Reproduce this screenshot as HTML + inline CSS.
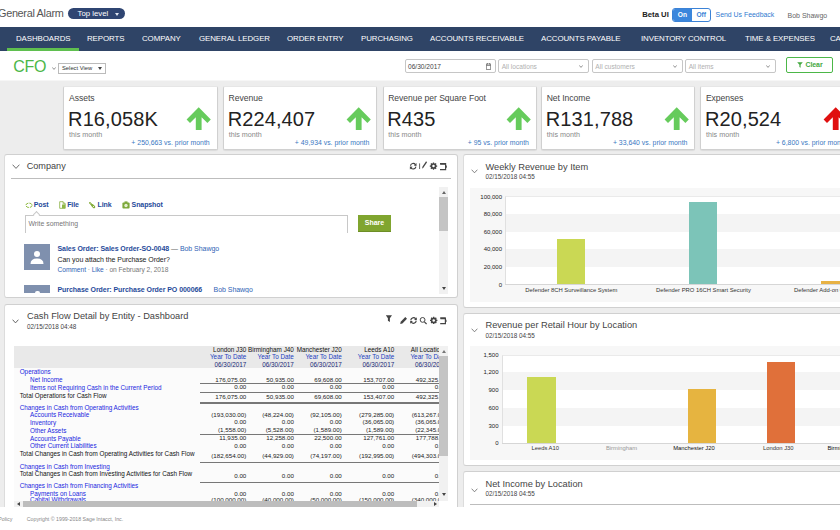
<!DOCTYPE html>
<html>
<head>
<meta charset="utf-8">
<title>CFO Dashboard</title>
<style>
*{box-sizing:border-box;margin:0;padding:0}
html,body{width:840px;height:530px;overflow:hidden;background:#fff;font-family:"Liberation Sans",sans-serif;color:#333}
.a{position:absolute;white-space:nowrap}
#top{left:0;top:0;width:840px;height:27px;background:#fff}
#nav{left:0;top:27px;width:840px;height:24px;background:#2f4466}
#nav span{position:absolute;top:7px;font-size:7.9px;color:#fff;letter-spacing:-0.08px;line-height:10px}
#sub{left:0;top:51px;width:840px;height:29px;background:#fff}
#bg{left:0;top:80px;width:840px;height:427px;background:#ededed;border-top:1px solid #f6f6f6}
#foot{left:0;top:507px;width:840px;height:23px;background:#fff;z-index:50}
.card{position:absolute;top:86px;height:64px;width:154.3px;background:#fff;border:1px solid #d0d0d0;border-top-color:#e6e6e6;border-radius:2px;box-shadow:0 1px 1px rgba(0,0,0,.08)}
.card .t{position:absolute;left:4.7px;top:6px;font-size:8.6px;color:#444;line-height:10px;letter-spacing:-0.05px}
.card .v{position:absolute;left:3.8px;top:20.9px;font-size:20px;color:#222;line-height:22px;letter-spacing:0.1px}
.card .m{position:absolute;left:4.8px;top:44.2px;font-size:7.2px;color:#888;line-height:8px}
.card .p{position:absolute;right:6.9px;top:52px;font-size:6.9px;color:#3a78c2;line-height:8px}
.card svg{position:absolute;left:121px;top:18.7px}
.panel{position:absolute;background:#fff;border:1px solid #d0d0d0;border-radius:3px}
.pt{position:absolute;font-size:9.25px;color:#444;line-height:12px}
.pd{position:absolute;font-size:6.35px;color:#444;line-height:8px}
.chev{position:absolute}
.sel{position:absolute;top:59px;height:14px;width:91px;border:1px solid #c6c6c6;border-radius:2px;background:#fff;font-size:6.6px;color:#b0b0b0;line-height:13.5px;padding-left:2.5px}
.tab{position:absolute;top:45.4px;font-size:7px;font-weight:bold;color:#1f4a9a;line-height:9px;letter-spacing:-0.1px}
.fl{position:absolute;left:51.5px;font-size:7px;line-height:9px;color:#1f4a9a;white-space:nowrap;letter-spacing:-0.05px}
.fl b{color:#1f4a9a}
.lk{color:#2f63b5}
.th,.tn{position:absolute;font-size:6.2px;line-height:7.5px;white-space:nowrap;text-align:right;color:#222}
.th{font-size:6.35px}
.tl{position:absolute;font-size:6.33px;line-height:7.5px;white-space:nowrap}
.yl{position:absolute;font-size:6px;line-height:7px;color:#222;white-space:nowrap;text-align:right}
.xl{position:absolute;width:120px;text-align:center;font-size:5.85px;line-height:7px;white-space:nowrap}
.th,.tn{position:absolute;font-size:6.2px;line-height:7.5px;white-space:nowrap;text-align:right;color:#222}
.th{font-size:6.35px}
.tl{position:absolute;font-size:6.33px;line-height:7.5px;white-space:nowrap}
.w{position:absolute;left:1px;top:0;right:0;bottom:0}
.panel{border-left-color:#dcdcdc}
.th,.tn{position:absolute;font-size:6.2px;line-height:7.5px;white-space:nowrap;text-align:right;color:#222}
.th{font-size:6.35px}
.tl{position:absolute;font-size:6.33px;line-height:7.5px;white-space:nowrap}
.th,.tn{position:absolute;font-size:6.2px;line-height:7.5px;white-space:nowrap;text-align:right;color:#222}
.th{font-size:6.35px}
.tl{position:absolute;font-size:6.33px;line-height:7.5px;white-space:nowrap}
</style>
</head>
<body>
<div class="a" id="top">
  <div class="a" style="left:-2px;top:5px;font-size:10.9px;color:#555;line-height:16px;letter-spacing:-0.32px">General Alarm</div>
  <div class="a" style="left:68px;top:8px;width:57px;height:11px;border-radius:6px;background:#2f4572;color:#fff;font-size:7.8px;line-height:11px;padding-left:9.5px">Top level</div>
  <div class="a" style="left:115px;top:13px;width:0;height:0;border-left:2.5px solid transparent;border-right:2.5px solid transparent;border-top:3px solid #dfe5f0"></div>
  <div class="a" style="left:642.3px;top:10.2px;font-size:7.7px;color:#222;line-height:9px;font-weight:bold">Beta UI</div>
  <div class="a" style="left:671.7px;top:8px;width:39.2px;height:14px;border:1px solid #3b82d6;border-radius:3px;background:#fff;overflow:hidden">
     <div class="a" style="left:0;top:0;width:19.5px;height:12px;background:#3b86dc;color:#fff;font-size:6.6px;line-height:12px;text-align:center;font-weight:bold">On</div>
     <div class="a" style="left:19.5px;top:0;width:18px;height:12px;color:#3b82d6;font-size:6.6px;line-height:12px;text-align:center;font-weight:bold">Off</div>
  </div>
  <div class="a" style="left:715.6px;top:10.2px;font-size:6.9px;color:#2f7ad0;line-height:9px">Send Us Feedback</div>
  <div class="a" style="left:787.5px;top:10.5px;font-size:7px;color:#666;line-height:9px">Bob Shawgo</div>
</div>
<div class="a" id="nav">
  <div class="a" style="left:7px;top:21px;width:72px;height:3px;background:#5fbf4f"></div>
  <span style="left:16px">DASHBOARDS</span>
  <span style="left:87px">REPORTS</span>
  <span style="left:142px">COMPANY</span>
  <span style="left:199px">GENERAL LEDGER</span>
  <span style="left:287px">ORDER ENTRY</span>
  <span style="left:361px">PURCHASING</span>
  <span style="left:430px">ACCOUNTS RECEIVABLE</span>
  <span style="left:541px">ACCOUNTS PAYABLE</span>
  <span style="left:641px">INVENTORY CONTROL</span>
  <span style="left:745px">TIME &amp; EXPENSES</span>
  <span style="left:830px">CASH</span>
</div>
<div class="a" id="sub">
  <div class="a" style="left:13.3px;top:4.6px;font-size:16px;color:#4cb748;line-height:22px;letter-spacing:-0.3px">CFO</div>
</div>
<svg class="a" style="left:52px;top:67px" width="4" height="3" viewBox="0 0 4 3"><path d="M0.3 0.4 L2 2.4 L3.7 0.4" fill="none" stroke="#666" stroke-width="0.7"/></svg>
<div class="a" style="left:58px;top:63px;width:48px;height:10.5px;border:1px solid #bbb;background:#fff;font-size:5.8px;line-height:8px;color:#333;padding-left:3px">Select View</div>
<div class="a" style="left:98px;top:67px;width:0;height:0;border-left:2px solid transparent;border-right:2px solid transparent;border-top:3px solid #444"></div>

<div class="sel" style="left:404.5px;color:#444">06/30/2017<svg class="a" style="right:4px;top:2.5px" width="5" height="7" viewBox="0 0 5 7"><rect x="0.3" y="1" width="4.4" height="5.6" fill="none" stroke="#666" stroke-width="0.7"/><path d="M0.3 2.5h4.4M1.5 0v1.6M3.5 0v1.6" stroke="#666" stroke-width="0.7"/></svg></div>
<div class="sel" style="left:498.2px">All locations<svg class="a" style="right:5px;top:5px" width="4" height="3" viewBox="0 0 4 3"><path d="M0.3 0.4 L2 2.4 L3.7 0.4" fill="none" stroke="#777" stroke-width="0.8"/></svg></div>
<div class="sel" style="left:591.8px">All customers<svg class="a" style="right:5px;top:5px" width="4" height="3" viewBox="0 0 4 3"><path d="M0.3 0.4 L2 2.4 L3.7 0.4" fill="none" stroke="#777" stroke-width="0.8"/></svg></div>
<div class="sel" style="left:685.2px">All items<svg class="a" style="right:5px;top:5px" width="4" height="3" viewBox="0 0 4 3"><path d="M0.3 0.4 L2 2.4 L3.7 0.4" fill="none" stroke="#777" stroke-width="0.8"/></svg></div>
<div class="a" style="left:786px;top:56.8px;width:46.5px;height:16px;border:1px solid #4cb748;border-radius:2px;color:#43a83f;font-size:7px;font-weight:bold;line-height:14px;padding-left:18.5px;letter-spacing:-0.1px">Clear<svg class="a" style="left:9.5px;top:4px" width="6" height="6" viewBox="0 0 6 6"><path d="M0.2 0.2h5.6L3.6 2.8v3L2.4 4.9V2.8z" fill="#43a83f"/></svg></div>

<div class="a" id="bg"></div>

<!-- KPI cards -->
<div class="card" style="left:63.3px"><div class="t">Assets</div><div class="v">R16,058K</div><div class="m">this month</div><div class="p">+ 250,663 vs. prior month</div>
<svg width="28" height="26" viewBox="0 0 28 26"><path d="M13.7 1.2 L25.8 13.5 L22.4 17 L16.6 11.2 L16.6 24 L10.8 24 L10.8 11.2 L5 17 L1.6 13.5 Z" fill="#66cb5c"/></svg></div>
<div class="card" style="left:222.9px"><div class="t">Revenue</div><div class="v">R224,407</div><div class="m">this month</div><div class="p">+ 49,934 vs. prior month</div>
<svg width="28" height="26" viewBox="0 0 28 26"><path d="M13.7 1.2 L25.8 13.5 L22.4 17 L16.6 11.2 L16.6 24 L10.8 24 L10.8 11.2 L5 17 L1.6 13.5 Z" fill="#66cb5c"/></svg></div>
<div class="card" style="left:382.5px"><div class="t">Revenue per Square Foot</div><div class="v">R435</div><div class="m">this month</div><div class="p">+ 95 vs. prior month</div>
<svg width="28" height="26" viewBox="0 0 28 26"><path d="M13.7 1.2 L25.8 13.5 L22.4 17 L16.6 11.2 L16.6 24 L10.8 24 L10.8 11.2 L5 17 L1.6 13.5 Z" fill="#66cb5c"/></svg></div>
<div class="card" style="left:541px"><div class="t">Net Income</div><div class="v">R131,788</div><div class="m">this month</div><div class="p">+ 33,640 vs. prior month</div>
<svg width="28" height="26" viewBox="0 0 28 26"><path d="M13.7 1.2 L25.8 13.5 L22.4 17 L16.6 11.2 L16.6 24 L10.8 24 L10.8 11.2 L5 17 L1.6 13.5 Z" fill="#66cb5c"/></svg></div>
<div class="card" style="left:700.2px"><div class="t">Expenses</div><div class="v">R20,524</div><div class="m">this month</div><div class="p">+ 6,800 vs. prior month</div>
<svg width="28" height="26" viewBox="0 0 28 26"><path d="M13.7 1.2 L25.8 13.5 L22.4 17 L16.6 11.2 L16.6 24 L10.8 24 L10.8 11.2 L5 17 L1.6 13.5 Z" fill="#e01010"/></svg></div>

<!-- Panels -->
<div class="panel" id="p1" style="left:4px;top:154px;width:454px;height:144px;overflow:hidden"><div class="w">
  <svg class="chev" style="left:5.8px;top:9.4px" width="8" height="6" viewBox="0 0 8 6"><path d="M0.6 0.7 L4 4.4 L7.4 0.7" fill="none" stroke="#555" stroke-width="0.85"/></svg>
  <div class="pt" style="left:20.7px;top:4.8px;font-size:9.15px">Company</div>
  <div class="a" style="left:4.8px;top:23px;width:440.7px;height:1px;background:#bdbdbd"></div>
  <!-- header icons -->
  <svg class="a" style="left:403px;top:5px" width="40" height="12" viewBox="0 0 40 12">
<path d="M1.5 5.8 A2.7 2.7 0 0 1 6.4 4.6" fill="none" stroke="#444" stroke-width="1.2"/><path d="M7.5 3.0 L7.5 5.9 L4.8 5.6000000000000005 Z" fill="#444"/><path d="M6.9 6.6000000000000005 A2.7 2.7 0 0 1 2.0 7.800000000000001" fill="none" stroke="#444" stroke-width="1.2"/><path d="M0.9000000000000004 9.4 L0.9000000000000004 6.5 L3.6 6.8 Z" fill="#444"/>
<path d="M10.6 3.4V9" stroke="#555" stroke-width="0.9"/><path d="M13.6 7.6L17 2.6" stroke="#444" stroke-width="1.3"/><circle cx="17.2" cy="2.2" r="0.8" fill="#444"/><path d="M13.2 8.6l0.2-1.4 1 0.8z" fill="#444"/>
<circle cx="24.5" cy="6.1" r="2.1" fill="none" stroke="#444" stroke-width="1.7"/><path d="M24.5 2.3999999999999995V9.8M20.8 6.1H28.2M21.9 3.4999999999999996L27.1 8.7M27.1 3.4999999999999996L21.9 8.7" stroke="#444" stroke-width="1.3"/><circle cx="24.5" cy="6.1" r="1.25" fill="#fff"/>
<path d="M31 3.6H36.6V9.6H31" fill="none" stroke="#444" stroke-width="1.2"/><path d="M31.2 4H36.6" stroke="#444" stroke-width="1.6"/><path d="M36.4 5.6h1.4v2.2h-1.4z" fill="#444"/>
</svg>
  <!-- tabs -->
  <svg class="a" style="left:18.6px;top:46.6px" width="8" height="7" viewBox="0 0 8 7"><ellipse cx="4" cy="3.3" rx="3.1" ry="2.2" fill="none" stroke="#8cb83e" stroke-width="1" stroke-dasharray="3.2 1"/></svg>
  <div class="tab" style="left:27.7px">Post</div>
  <svg class="a" style="left:53px;top:45.6px" width="7" height="8" viewBox="0 0 7 8"><path d="M0.7 0.7h3.4l2.1 2.1v4.5h-5.5z" fill="#fff" stroke="#86ad3c" stroke-width="0.8"/><path d="M3 3.4h3.2v3.9h-3.2z" fill="#8fb846"/><path d="M4.1 0.7v2.1h2.1" fill="none" stroke="#86ad3c" stroke-width="0.7"/></svg>
  <div class="tab" style="left:61.2px">File</div>
  <svg class="a" style="left:83px;top:46.5px" width="7" height="7" viewBox="0 0 7 7"><path d="M0.9 0.9 L2.8 2.8" stroke="#86ad3c" stroke-width="1.7" stroke-linecap="round"/><path d="M3.4 3.4 L5 5" stroke="#86ad3c" stroke-width="2.5" stroke-linecap="round"/><circle cx="4.5" cy="4.5" r="0.55" fill="#fff"/><circle cx="1.5" cy="1.5" r="0.35" fill="#fff"/></svg>
  <div class="tab" style="left:91.6px">Link</div>
  <svg class="a" style="left:116px;top:46px" width="8" height="8" viewBox="0 0 8 8"><rect x="0.4" y="1.4" width="7.2" height="6" rx="1" fill="#7da83a"/><rect x="2.5" y="0.4" width="3" height="1.6" fill="#7da83a"/><circle cx="4" cy="4.5" r="1.7" fill="#e4efcf"/></svg>
  <div class="tab" style="left:125.6px">Snapshot</div>
  <!-- input -->
  <div class="a" style="left:19px;top:59.5px;width:323px;height:18.5px;border:1px solid #c8c8c8;border-bottom:none;background:#fff"></div>
  <div class="a" style="left:28px;top:56.5px;width:5px;height:5px;background:#fff;border-left:1px solid #c8c8c8;border-top:1px solid #c8c8c8;transform:rotate(45deg)"></div>
  <div class="a" style="left:22.4px;top:64.3px;font-size:6.9px;color:#777;line-height:9px">Write something</div>
  <div class="a" style="left:352px;top:60px;width:33px;height:17px;background:#80a52f;border-bottom:1px solid #6d8e26;color:#fff;font-size:7px;font-weight:bold;line-height:16px;text-align:center">Share</div>
  <!-- feed -->
  <div class="a" style="left:18px;top:89px;width:26px;height:26px;background:#7f90ae"></div>
  <svg class="a" style="left:23px;top:94px" width="16" height="16" viewBox="0 0 16 16"><circle cx="8" cy="5" r="3" fill="#fff"/><path d="M1.5 15 Q1.5 9.5 8 9.5 Q14.5 9.5 14.5 15 Z" fill="#fff"/></svg>
  <div class="fl" style="top:89.3px"><b>Sales Order: Sales Order-SO-0048</b> <span style="color:#666">&mdash;</span> <span class="lk">Bob Shawgo</span></div>
  <div class="fl" style="top:100.3px;color:#222">Can you attach the Purchase Order?</div>
  <div class="fl" style="top:110.2px;font-size:6.65px"><span class="lk">Comment</span> <span style="color:#888">&middot;</span> <span class="lk">Like</span> <span style="color:#777">&middot; on February 2, 2018</span></div>
  <div class="a" style="left:18px;top:130px;width:26px;height:8px;background:#7f90ae"></div>
  <div class="a" style="left:28.5px;top:136.4px;width:5px;height:1.6px;background:#fff;border-radius:3px 3px 0 0"></div>
  <div class="fl" style="top:130.2px"><b>Purchase Order: Purchase Order PO 000066</b> &nbsp;&nbsp;&nbsp;&nbsp; <span class="lk">Bob Shawgo</span></div>
  <div class="a" style="left:0;top:138px;width:433px;height:6px;background:#fff"></div>
  <!-- scrollbar -->
  <div class="a" style="left:433px;top:32px;width:9px;height:107px;background:#f1f1f1"></div>
  <div class="a" style="left:433px;top:41.5px;width:9px;height:34.5px;background:#c4c4c4"></div>
  <div class="a" style="left:435.5px;top:36px;width:0;height:0;border-left:2px solid transparent;border-right:2px solid transparent;border-bottom:3px solid #666"></div>
  <div class="a" style="left:435.5px;top:132px;width:0;height:0;border-left:2px solid transparent;border-right:2px solid transparent;border-top:3px solid #444"></div>
</div></div>
<div class="panel" id="p2" style="left:4px;top:304px;width:454px;height:210px;overflow:hidden"><div class="w">
<svg class="chev" style="left:6.4px;top:14px" width="7" height="5" viewBox="0 0 7 5"><path d="M0.6 0.7 L3.5 3.9 L6.4 0.7" fill="none" stroke="#555" stroke-width="0.9"/></svg>
<div class="pt" style="left:21px;top:5.2px">Cash Flow Detail by Entity - Dashboard</div>
<div class="pd" style="left:21px;top:18px">02/15/2018 04:48</div>
<svg class="a" style="left:379px;top:10px" width="64" height="12" viewBox="0 0 64 12">
<path d="M0.8 0.2h6.2L4.9 3.2v3.7L2.9 5.7V3.2z" fill="#444"/>
<path d="M15.2 8.9l0.5-2.2 4.6-4.6 1.7 1.7-4.6 4.6z" fill="#444"/>
<path d="M25.8 5.1 A2.7 2.7 0 0 1 30.7 3.9" fill="none" stroke="#444" stroke-width="1.2"/><path d="M31.8 2.3 L31.8 5.2 L29.1 4.9 Z" fill="#444"/><path d="M31.2 5.9 A2.7 2.7 0 0 1 26.3 7.1" fill="none" stroke="#444" stroke-width="1.2"/><path d="M25.2 8.7 L25.2 5.8 L27.9 6.1 Z" fill="#444"/>
<circle cx="37.6" cy="4.9" r="2.4" fill="none" stroke="#444" stroke-width="1"/><path d="M39.4 6.8l2.2 2.2" stroke="#444" stroke-width="1.2"/>
<circle cx="48.7" cy="5.4" r="2.1" fill="none" stroke="#444" stroke-width="1.7"/><path d="M48.7 1.7000000000000002V9.100000000000001M45.0 5.4H52.400000000000006M46.1 2.8000000000000003L51.300000000000004 8.0M51.300000000000004 2.8000000000000003L46.1 8.0" stroke="#444" stroke-width="1.3"/><circle cx="48.7" cy="5.4" r="1.25" fill="#fff"/>
<path d="M55.2 3.0H60.400000000000006V8.6H55.2" fill="none" stroke="#444" stroke-width="1.2"/><path d="M55.400000000000006 3.4H60.400000000000006" stroke="#444" stroke-width="1.6"/><path d="M60.2 4.8h1.3v2.2h-1.3z" fill="#444"/>
</svg>
<div class="a" id="tbl" style="left:8.2px;top:41px;width:425.1px;height:154.5px;overflow:hidden;background:#fbfbfb">
<div class="a" style="left:0;top:0;width:440px;height:22px;background:#e9e9e9"></div>
<div class="th" style="right:193.0px;top:0.1px;color:#111">London J30</div>
<div class="th" style="right:193.0px;top:7.4px;color:#1d3fc0">Year To Date</div>
<div class="th" style="right:193.0px;top:14.9px;color:#1a2a78">06/30/2017</div>
<div class="th" style="right:145.4px;top:0.1px;color:#111">Birmingham J40</div>
<div class="th" style="right:145.4px;top:7.4px;color:#1d3fc0">Year To Date</div>
<div class="th" style="right:145.4px;top:14.9px;color:#1a2a78">06/30/2017</div>
<div class="th" style="right:97.5px;top:0.1px;color:#111">Manchester J20</div>
<div class="th" style="right:97.5px;top:7.4px;color:#1d3fc0">Year To Date</div>
<div class="th" style="right:97.5px;top:14.9px;color:#1a2a78">06/30/2017</div>
<div class="th" style="right:45.1px;top:0.1px;color:#111">Leeds A10</div>
<div class="th" style="right:45.1px;top:7.4px;color:#1d3fc0">Year To Date</div>
<div class="th" style="right:45.1px;top:14.9px;color:#1a2a78">06/30/2017</div>
<div class="th" style="right:-7.5px;top:0.1px;color:#111">All Locations</div>
<div class="th" style="right:-7.5px;top:7.4px;color:#1d3fc0">Year To Date</div>
<div class="th" style="right:-7.5px;top:14.9px;color:#1a2a78">06/30/2017</div>
<div class="tl" style="left:5.5px;top:22.1px;color:#1a1fe0">Operations</div>
<div class="tl" style="left:15.9px;top:29.8px;color:#1a1fe0">Net Income</div>
<div class="tn" style="right:193.0px;top:29.9px">176,075.00</div>
<div class="tn" style="right:145.4px;top:29.9px">50,935.00</div>
<div class="tn" style="right:97.5px;top:29.9px">69,608.00</div>
<div class="tn" style="right:45.1px;top:29.9px">153,707.00</div>
<div class="tn" style="right:-7.5px;top:29.9px">492,325.00</div>
<div class="tl" style="left:15.9px;top:37.6px;color:#1a1fe0">Items not Requiring Cash in the Current Period</div>
<div class="tn" style="right:193.0px;top:36.6px">0.00</div>
<div class="tn" style="right:145.4px;top:36.6px">0.00</div>
<div class="tn" style="right:97.5px;top:36.6px">0.00</div>
<div class="tn" style="right:45.1px;top:36.6px">0.00</div>
<div class="tn" style="right:-7.5px;top:36.6px">0.00</div>
<div class="tl" style="left:5.5px;top:45.9px;color:#111">Total Operations for Cash Flow</div>
<div class="tn" style="right:193.0px;top:46.6px">176,075.00</div>
<div class="tn" style="right:145.4px;top:46.6px">50,935.00</div>
<div class="tn" style="right:97.5px;top:46.6px">69,608.00</div>
<div class="tn" style="right:45.1px;top:46.6px">153,407.00</div>
<div class="tn" style="right:-7.5px;top:46.6px">492,325.00</div>
<div class="tl" style="left:5.5px;top:57.9px;color:#1a1fe0">Changes in Cash from Operating Activities</div>
<div class="tl" style="left:15.9px;top:65.2px;color:#1a1fe0">Accounts Receivable</div>
<div class="tn" style="right:193.0px;top:64.6px">(193,030.00)</div>
<div class="tn" style="right:145.4px;top:64.6px">(48,224.00)</div>
<div class="tn" style="right:97.5px;top:64.6px">(92,105.00)</div>
<div class="tn" style="right:45.1px;top:64.6px">(279,285.00)</div>
<div class="tn" style="right:-7.5px;top:64.6px">(613,267.00)</div>
<div class="tl" style="left:15.9px;top:73.1px;color:#1a1fe0">Inventory</div>
<div class="tn" style="right:193.0px;top:72.4px">0.00</div>
<div class="tn" style="right:145.4px;top:72.4px">0.00</div>
<div class="tn" style="right:97.5px;top:72.4px">0.00</div>
<div class="tn" style="right:45.1px;top:72.4px">(36,065.00)</div>
<div class="tn" style="right:-7.5px;top:72.4px">(36,065.00)</div>
<div class="tl" style="left:15.9px;top:80.9px;color:#1a1fe0">Other Assets</div>
<div class="tn" style="right:193.0px;top:80.4px">(1,558.00)</div>
<div class="tn" style="right:145.4px;top:80.4px">(5,528.00)</div>
<div class="tn" style="right:97.5px;top:80.4px">(1,589.00)</div>
<div class="tn" style="right:45.1px;top:80.4px">(1,589.00)</div>
<div class="tn" style="right:-7.5px;top:80.4px">(22,345.00)</div>
<div class="tl" style="left:15.9px;top:88.6px;color:#1a1fe0">Accounts Payable</div>
<div class="tn" style="right:193.0px;top:88.4px">11,935.00</div>
<div class="tn" style="right:145.4px;top:88.4px">12,258.00</div>
<div class="tn" style="right:97.5px;top:88.4px">22,500.00</div>
<div class="tn" style="right:45.1px;top:88.4px">127,761.00</div>
<div class="tn" style="right:-7.5px;top:88.4px">177,788.00</div>
<div class="tl" style="left:15.9px;top:96.1px;color:#1a1fe0">Other Current Liabilities</div>
<div class="tn" style="right:193.0px;top:96.4px">0.00</div>
<div class="tn" style="right:145.4px;top:96.4px">0.00</div>
<div class="tn" style="right:97.5px;top:96.4px">0.00</div>
<div class="tn" style="right:45.1px;top:96.4px">0.00</div>
<div class="tn" style="right:-7.5px;top:96.4px">0.00</div>
<div class="tl" style="left:5.5px;top:103.6px;color:#111">Total Changes in Cash from Operating Activities for Cash Flow</div>
<div class="tn" style="right:193.0px;top:106.1px">(182,654.00)</div>
<div class="tn" style="right:145.4px;top:106.1px">(44,929.00)</div>
<div class="tn" style="right:97.5px;top:106.1px">(74,197.00)</div>
<div class="tn" style="right:45.1px;top:106.1px">(192,995.00)</div>
<div class="tn" style="right:-7.5px;top:106.1px">(494,303.00)</div>
<div class="tl" style="left:5.5px;top:116.9px;color:#1a1fe0">Changes in Cash from Investing</div>
<div class="tl" style="left:5.5px;top:123.9px;color:#111">Total Changes in Cash from Investing Activities for Cash Flow</div>
<div class="tn" style="right:193.0px;top:125.8px">0.00</div>
<div class="tn" style="right:145.4px;top:125.8px">0.00</div>
<div class="tn" style="right:97.5px;top:125.8px">0.00</div>
<div class="tn" style="right:45.1px;top:125.8px">0.00</div>
<div class="tn" style="right:-7.5px;top:125.8px">0.00</div>
<div class="tl" style="left:5.5px;top:136.4px;color:#1a1fe0">Changes in Cash from Financing Activities</div>
<div class="tl" style="left:15.9px;top:143.9px;color:#1a1fe0">Payments on Loans</div>
<div class="tn" style="right:193.0px;top:144.1px">0.00</div>
<div class="tn" style="right:145.4px;top:144.1px">0.00</div>
<div class="tn" style="right:97.5px;top:144.1px">0.00</div>
<div class="tn" style="right:45.1px;top:144.1px">0.00</div>
<div class="tn" style="right:-7.5px;top:144.1px">0.00</div>
<div class="tl" style="left:15.9px;top:150.1px;color:#1a1fe0">Capital Withdrawals</div>
<div class="tn" style="right:193.0px;top:150.1px">(100,000.00)</div>
<div class="tn" style="right:145.4px;top:150.1px">(40,000.00)</div>
<div class="tn" style="right:97.5px;top:150.1px">(50,000.00)</div>
<div class="tn" style="right:45.1px;top:150.1px">(150,000.00)</div>
<div class="tn" style="right:-7.5px;top:150.1px">(340,000.00)</div>
<div class="a" style="left:185.4px;top:37.1px;width:260px;height:0.8px;background:#777"></div>
<div class="a" style="left:185.4px;top:45.6px;width:260px;height:0.8px;background:#777"></div>
<div class="a" style="left:185.4px;top:56.1px;width:260px;height:1.6px;background:#777"></div>
<div class="a" style="left:185.4px;top:88.0px;width:260px;height:0.8px;background:#777"></div>
<div class="a" style="left:185.4px;top:116.3px;width:260px;height:0.8px;background:#777"></div>
<div class="a" style="left:185.4px;top:135.7px;width:260px;height:1.6px;background:#777"></div>
</div>
<div class="a" style="left:433.3px;top:41px;width:8.7px;height:154.5px;background:#f1f1f1"></div>
<div class="a" style="left:433.3px;top:50.5px;width:8.7px;height:100.0px;background:#c4c4c4"></div>
<div class="a" style="left:435.7px;top:44.5px;width:0;height:0;border-left:2px solid transparent;border-right:2px solid transparent;border-bottom:3px solid #777"></div>
<div class="a" style="left:435.7px;top:187.5px;width:0;height:0;border-left:2px solid transparent;border-right:2px solid transparent;border-top:3px solid #444"></div>
<div class="a" style="left:8.2px;top:195.5px;width:425.1px;height:7px;background:#f1f1f1"></div>
<div class="a" style="left:17.3px;top:195.5px;width:393.4px;height:7px;background:#bdbdbd"></div>
<div class="a" style="left:11px;top:197px;width:0;height:0;border-top:2px solid transparent;border-bottom:2px solid transparent;border-right:3px solid #444"></div>
<div class="a" style="left:427.5px;top:197px;width:0;height:0;border-top:2px solid transparent;border-bottom:2px solid transparent;border-left:3px solid #444"></div>
</div></div><!--/p2-->
<div class="panel" id="p3" style="left:463px;top:154px;width:391px;height:154px;overflow:hidden"><div class="w">
<svg class="chev" style="left:5.8px;top:14.2px" width="7" height="5" viewBox="0 0 7 5"><path d="M0.6 0.7 L3.5 3.8 L6.4 0.7" fill="none" stroke="#666" stroke-width="0.8"/></svg>
<div class="pt" style="left:20.5px;top:5.5px">Weekly Revenue by Item</div>
<div class="pd" style="left:20.5px;top:17.8px">02/15/2018 04:55</div>
<div class="a" style="left:5.399999999999977px;top:32.80000000000001px;width:400px;height:114.2px;background:#f7f7f7"></div>
<div class="a" style="left:40.19999999999999px;top:41.400000000000006px;width:400px;height:87.99999999999997px;background:#fff;border-top:1px solid #eaeaea;border-left:1px solid #e0e0e0"></div>
<div class="a" style="left:41.19999999999999px;top:59.0px;width:400px;height:17.6px;background:#f4f4f4"></div>
<div class="a" style="left:41.19999999999999px;top:94.2px;width:400px;height:17.6px;background:#f4f4f4"></div>
<div class="a" style="left:40.19999999999999px;top:129.4px;width:400px;height:1px;background:#d6d6d6"></div>
<div class="yl" style="right:351px;top:38.5px">100,000</div>
<div class="yl" style="right:351px;top:56.1px">80,000</div>
<div class="yl" style="right:351px;top:73.7px">60,000</div>
<div class="yl" style="right:351px;top:91.3px">40,000</div>
<div class="yl" style="right:351px;top:108.9px">20,000</div>
<div class="yl" style="right:351px;top:126.5px">0</div>
<div class="a" style="left:92.3px;top:83.7px;width:28.0px;height:45.7px;background:#cad854"></div>
<div class="a" style="left:224.4px;top:47.0px;width:27.8px;height:82.4px;background:#7cc4b8"></div>
<div class="a" style="left:355.6px;top:126.2px;width:29.4px;height:3.2px;background:#e8b244"></div>
<div class="xl" style="left:46.3px;top:131.8px;color:#333">Defender 8CH Surveillance System</div>
<div class="xl" style="left:178.4px;top:131.8px;color:#333">Defender PRO 16CH Smart Security</div>
<div class="xl" style="left:306.5px;top:131.8px;color:#333">Defender Add-on Camera Kit</div>
</div></div><!--/p3-->
<div class="panel" id="p4" style="left:463px;top:313px;width:391px;height:153px;overflow:hidden"><div class="w">
<svg class="chev" style="left:5.8px;top:14.2px" width="7" height="5" viewBox="0 0 7 5"><path d="M0.6 0.7 L3.5 3.8 L6.4 0.7" fill="none" stroke="#666" stroke-width="0.8"/></svg>
<div class="pt" style="left:20.5px;top:4.800000000000001px">Revenue per Retail Hour by Location</div>
<div class="pd" style="left:20.5px;top:17.6px">02/15/2018 04:55</div>
<div class="a" style="left:5.399999999999977px;top:31.69999999999999px;width:400px;height:114.6px;background:#f7f7f7"></div>
<div class="a" style="left:36.60000000000002px;top:40.60000000000002px;width:400px;height:88.69999999999999px;background:#fff;border-top:1px solid #eaeaea;border-left:1px solid #e0e0e0"></div>
<div class="a" style="left:37.60000000000002px;top:58.3px;width:400px;height:17.8px;background:#f4f4f4"></div>
<div class="a" style="left:37.60000000000002px;top:93.8px;width:400px;height:17.8px;background:#f4f4f4"></div>
<div class="a" style="left:36.60000000000002px;top:129.3px;width:400px;height:1px;background:#d6d6d6"></div>
<div class="yl" style="right:354.5px;top:37.7px">1,500</div>
<div class="yl" style="right:354.5px;top:55.4px">1,200</div>
<div class="yl" style="right:354.5px;top:73.2px">900</div>
<div class="yl" style="right:354.5px;top:90.9px">600</div>
<div class="yl" style="right:354.5px;top:108.7px">300</div>
<div class="yl" style="right:354.5px;top:126.4px">0</div>
<div class="a" style="left:62px;top:62.5px;width:29px;height:66.8px;background:#cad854"></div>
<div class="a" style="left:222.6px;top:74.7px;width:28.4px;height:54.6px;background:#e6b440"></div>
<div class="a" style="left:302.2px;top:47.6px;width:28.2px;height:81.7px;background:#e0703a"></div>
<div class="xl" style="left:20.2px;top:131.4px;color:#333">Leeds A10</div>
<div class="xl" style="left:96.5px;top:131.4px;color:#999">Birmingham</div>
<div class="xl" style="left:169px;top:131.4px;color:#111">Manchester J20</div>
<div class="xl" style="left:253.3px;top:131.4px;color:#333">London J30</div>
<div class="xl" style="left:323.5px;top:131.4px;color:#111">Birmingham J40</div>
</div></div><!--/p4-->
<div class="panel" id="p5" style="left:463px;top:471px;width:391px;height:60px;overflow:hidden"><div class="w">
<svg class="chev" style="left:5.8px;top:15.7px" width="7" height="5" viewBox="0 0 7 5"><path d="M0.6 0.7 L3.5 3.8 L6.4 0.7" fill="none" stroke="#666" stroke-width="0.8"/></svg>
<div class="pt" style="left:20.5px;top:5.7px">Net Income by Location</div>
<div class="pd" style="left:20.5px;top:18.1px">02/15/2018 04:55</div>
<div class="a" style="left:4.5px;top:31.5px;width:400px;height:1px;background:#bdbdbd"></div>
</div></div><!--/p5-->

<div class="a" id="foot">
  <div class="a" style="left:-1.8px;top:9.3px;font-size:5.3px;color:#888;line-height:7px">Policy</div>
  <div class="a" style="left:26.8px;top:9.3px;font-size:5.25px;color:#888;line-height:7px">Copyright &copy; 1999-2018 Sage Intacct, Inc.</div>
</div>
</body>
</html>
